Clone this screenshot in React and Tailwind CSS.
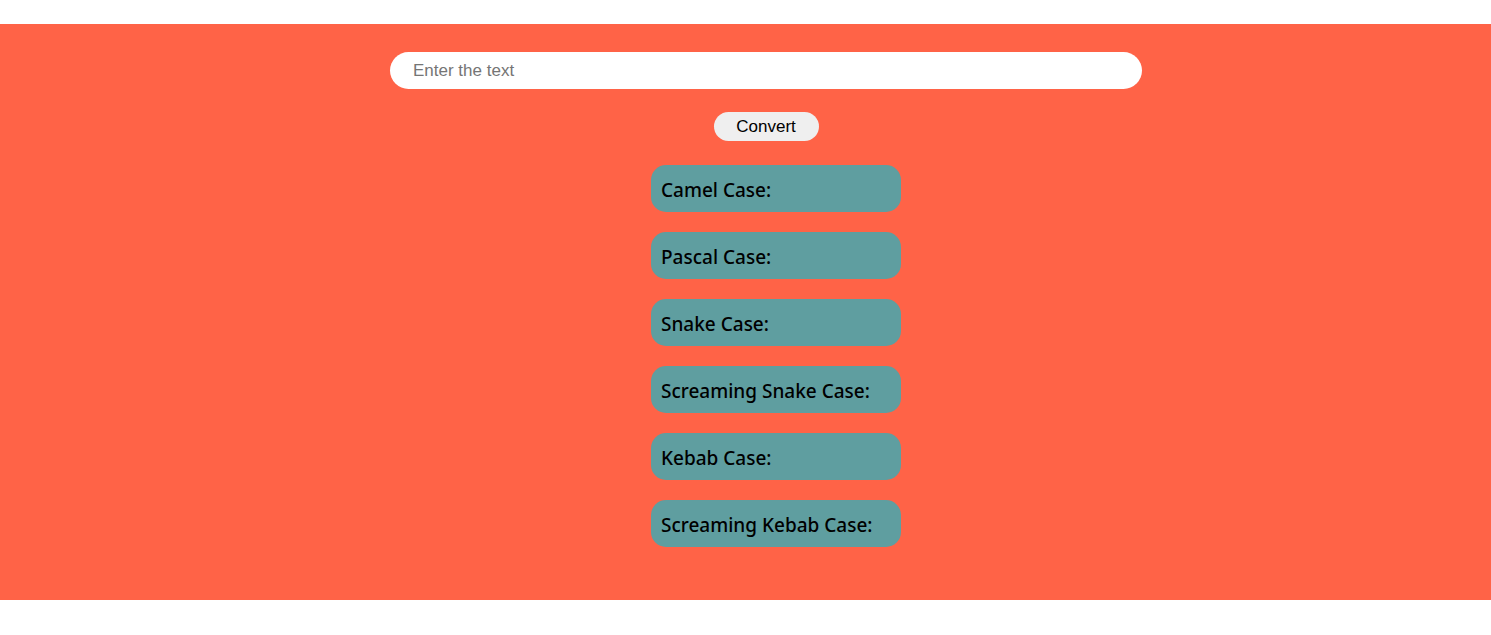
import { useState } from "react";

const cases = [
  "Camel Case:",
  "Pascal Case:",
  "Snake Case:",
  "Screaming Snake Case:",
  "Kebab Case:",
  "Screaming Kebab Case:",
];

export default function App() {
  const [text, setText] = useState("");

  return (
    <div className="min-h-screen bg-white pt-[24px]">
      <div className="flex h-[576px] flex-col items-center bg-[#ff6347] pl-[41px] pt-[28px]">
        <input
          type="text"
          value={text}
          onChange={(e) => setText(e.target.value)}
          placeholder="Enter the text"
          className="h-[37px] w-[752px] rounded-full bg-white pl-[23px] pr-4 text-[17px] text-black outline-none placeholder:text-[#757575] font-['Liberation_Sans',Arial,sans-serif]"
        />

        <button
          type="button"
          className="mt-[23px] h-[29px] w-[105px] rounded-full bg-[#efefef] text-[17px] text-black font-['Liberation_Sans',Arial,sans-serif]"
        >
          Convert
        </button>

        <div className="ml-[20px] mt-[24px] flex flex-col gap-[20px]">
          {cases.map((label) => (
            <div
              key={label}
              className="flex h-[47px] w-[250px] items-center rounded-[15px] bg-[#5f9ea0] px-[10px] pt-[4px] text-[19px] font-medium text-black font-['Noto_Sans',sans-serif]"
            >
              {label}
            </div>
          ))}
        </div>
      </div>
    </div>
  );
}
